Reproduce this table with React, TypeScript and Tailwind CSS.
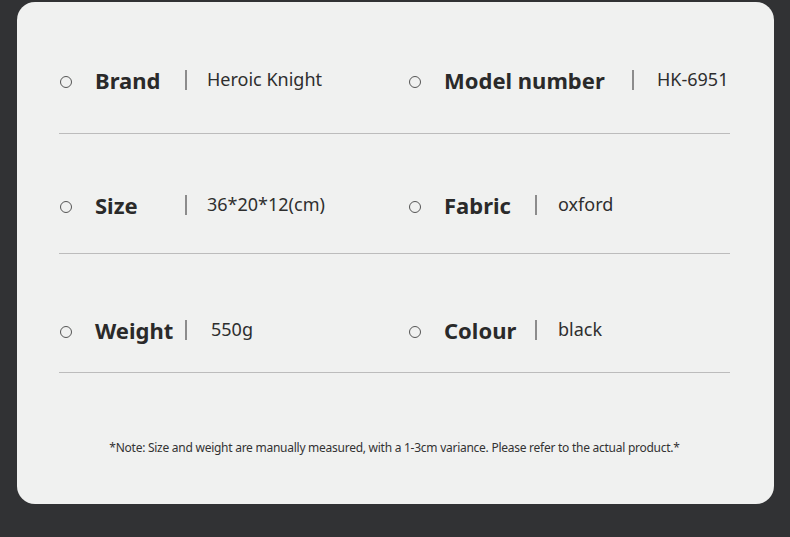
const rows = [
  {
    pad: 'pt-[63px] pb-[38px]',
    items: [
      { label: 'Brand', value: 'Heroic Knight', labelW: 'w-[90px]', valueGap: 'ml-[20px]' },
      { label: 'Model number', value: 'HK-6951', labelW: 'w-[188px]', valueGap: 'ml-[23px]' },
    ],
  },
  {
    pad: 'pt-[56px] pb-[33px]',
    items: [
      { label: 'Size', value: '36*20*12(cm)', labelW: 'w-[90px]', valueGap: 'ml-[20px]' },
      { label: 'Fabric', value: 'oxford', labelW: 'w-[91px]', valueGap: 'ml-[21px]' },
    ],
  },
  {
    pad: 'pt-[61px] pb-[27px]',
    items: [
      { label: 'Weight', value: '550g', labelW: 'w-[90px]', valueGap: 'ml-[24px]' },
      { label: 'Colour', value: 'black', labelW: 'w-[91px]', valueGap: 'ml-[21px]' },
    ],
  },
]

function Spec({ label, value, labelW, valueGap }: { label: string; value: string; labelW: string; valueGap: string }) {
  return (
    <div className="flex items-center h-[30px]">
      <span className="w-[12px] h-[12px] rounded-full border border-[#555] mt-[3px] ml-[1px] shrink-0" />
      <span className={`${labelW} ml-[23px] text-[22px] font-bold text-[#2a2a2a] leading-none whitespace-nowrap`}>{label}</span>
      <span className="w-[2px] h-[20px] bg-[#8c8c8c] shrink-0" />
      <span className={`${valueGap} text-[18px] text-[#2e2e2e] leading-none -mt-[3px] whitespace-nowrap`}>{value}</span>
    </div>
  )
}

export default function App() {
  return (
    <div className="w-[790px] h-[537px] bg-[#313234] pt-[2px] pl-[17px]" style={{ fontFamily: '"Noto Sans", "Open Sans", sans-serif' }}>
      <div className="w-[757px] h-[502px] bg-[#f0f1f0] rounded-[18px] pl-[42px] pr-[44px]">
        {rows.map((row, i) => (
          <div key={i} className={`${row.pad} grid grid-cols-[349px_1fr] border-b border-[#bcbcbc]`}>
            {row.items.map((item) => (
              <Spec key={item.label} {...item} />
            ))}
          </div>
        ))}
        <p className="pt-[67px] text-center text-[12px] leading-[16px] text-[#333] tracking-[-0.26px]">
          *Note: Size and weight are manually measured, with a 1-3cm variance. Please refer to the actual product.*
        </p>
      </div>
    </div>
  )
}
